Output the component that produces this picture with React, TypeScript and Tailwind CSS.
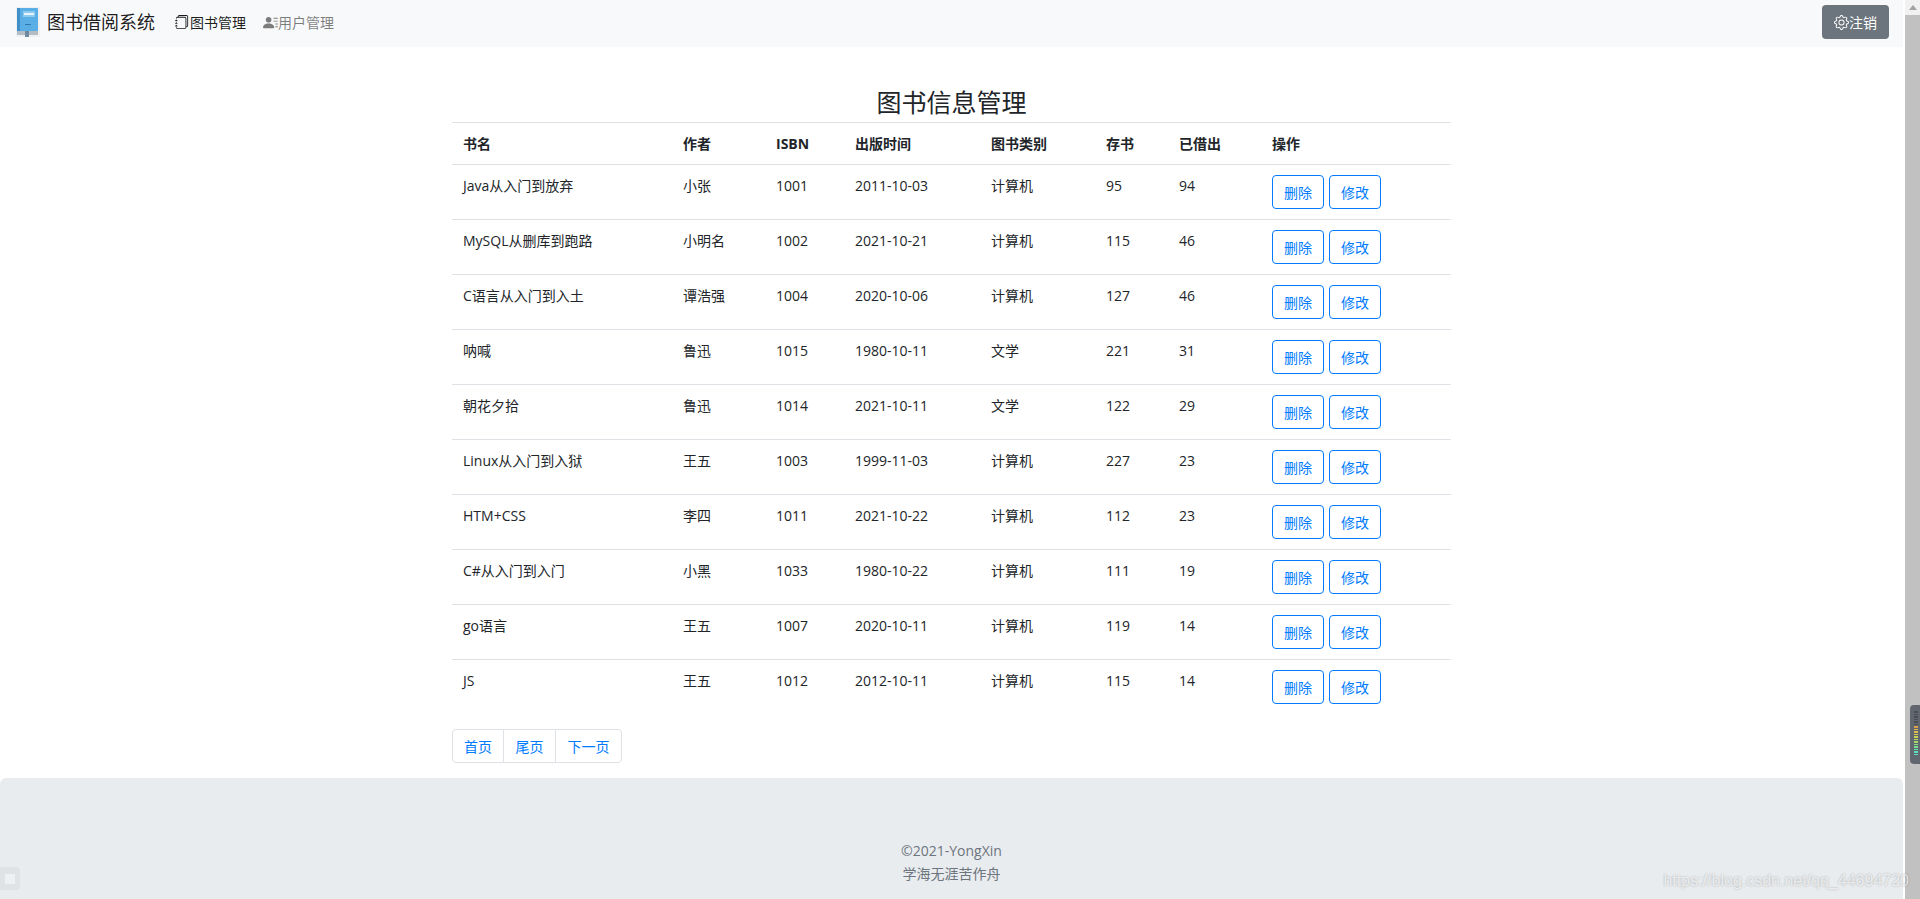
import { BsGear, BsJournals, BsPersonLinesFill } from 'react-icons/bs';

const books = [
  { name: 'Java从入门到放弃', author: '小张', isbn: '1001', date: '2011-10-03', type: '计算机', stock: 95, lent: 94 },
  { name: 'MySQL从删库到跑路', author: '小明名', isbn: '1002', date: '2021-10-21', type: '计算机', stock: 115, lent: 46 },
  { name: 'C语言从入门到入土', author: '谭浩强', isbn: '1004', date: '2020-10-06', type: '计算机', stock: 127, lent: 46 },
  { name: '呐喊', author: '鲁迅', isbn: '1015', date: '1980-10-11', type: '文学', stock: 221, lent: 31 },
  { name: '朝花夕拾', author: '鲁迅', isbn: '1014', date: '2021-10-11', type: '文学', stock: 122, lent: 29 },
  { name: 'Linux从入门到入狱', author: '王五', isbn: '1003', date: '1999-11-03', type: '计算机', stock: 227, lent: 23 },
  { name: 'HTM+CSS', author: '李四', isbn: '1011', date: '2021-10-22', type: '计算机', stock: 112, lent: 23 },
  { name: 'C#从入门到入门', author: '小黑', isbn: '1033', date: '1980-10-22', type: '计算机', stock: 111, lent: 19 },
  { name: 'go语言', author: '王五', isbn: '1007', date: '2020-10-11', type: '计算机', stock: 119, lent: 14 },
  { name: 'JS', author: '王五', isbn: '1012', date: '2012-10-11', type: '计算机', stock: 115, lent: 14 },
];

const headers = ['书名', '作者', 'ISBN', '出版时间', '图书类别', '存书', '已借出', '操作'];

function Logo() {
  return (
    <svg width="24" height="30" viewBox="0 0 24 30" className="shrink-0">
      <rect x="0" y="0" width="24" height="30" fill="#eef0f2" />
      <rect x="1" y="1" width="21" height="23" rx="1" fill="#5aaee6" />
      <rect x="1" y="1" width="3" height="23" fill="#3f8fcb" />
      <rect x="7" y="4" width="12" height="6" fill="#8ccbf0" />
      <rect x="8" y="6" width="10" height="2" fill="#e8f4fb" />
      <rect x="9" y="17" width="6" height="1" fill="#2f78ad" />
      <rect x="1" y="24" width="21" height="4" fill="#b4bcc4" />
      <rect x="9" y="24" width="4" height="6" fill="#6f8aa0" />
    </svg>
  );
}

function OutlineButton({ label }: { label: string }) {
  return (
    <button className="w-[52px] h-[34px] pt-px border border-[#007bff] rounded text-[#007bff] text-[14px] leading-none bg-white">
      {label}
    </button>
  );
}

export default function App() {
  return (
    <div
      className="relative flex h-[899px] overflow-hidden bg-white text-[#212529] text-[14px]"
      style={{ fontFamily: '"Open Sans", "Noto Sans CJK SC", sans-serif' }}
    >
      <div className="flex flex-col flex-1 min-w-0">
        <nav className="flex items-center h-[47px] shrink-0 bg-[#f8f9fa] pl-4 pr-[14px] pb-[3px]">
          <Logo />
          <span className="ml-[7px] text-[18px] text-black/90">图书借阅系统</span>
          <a className="flex items-center ml-5 text-black/90">
            <BsJournals className="w-[14px] h-[14px] mr-px" />
            <span>图书管理</span>
          </a>
          <a className="flex items-center ml-[17px] text-black/50">
            <BsPersonLinesFill className="w-[15px] h-[15px]" />
            <span>用户管理</span>
          </a>
          <button className="flex items-center justify-center ml-auto w-[67px] h-[34px] rounded bg-[#6c757d] text-white text-[14px]">
            <BsGear className="w-[15px] h-[15px]" />
            <span>注销</span>
          </button>
        </nav>

        <main className="w-[999px] ml-[452px] flex-1">
          <h1 className="pt-[38px] h-[75px] text-center text-[25px] leading-[34px] font-normal">图书信息管理</h1>
          <table className="w-full table-fixed border-collapse">
            <colgroup>
              <col className="w-[219px]" />
              <col className="w-[93px]" />
              <col className="w-[79px]" />
              <col className="w-[136px]" />
              <col className="w-[115px]" />
              <col className="w-[73px]" />
              <col className="w-[93px]" />
              <col />
            </colgroup>
            <thead>
              <tr className="h-[42px] border-y border-[#dee2e6]">
                {headers.map((h) => (
                  <th key={h} className="px-3 first:pl-[11px] text-left font-bold">
                    {h}
                  </th>
                ))}
              </tr>
            </thead>
            <tbody>
              {books.map((b) => (
                <tr key={b.isbn} className="h-[55px] border-b border-[#dee2e6] last:border-b-0 align-top">
                  <td className="pl-[11px] pr-3 pt-[10px]">{b.name}</td>
                  <td className="px-3 pt-[10px]">{b.author}</td>
                  <td className="px-3 pt-[10px]">{b.isbn}</td>
                  <td className="px-3 pt-[10px]">{b.date}</td>
                  <td className="px-3 pt-[10px]">{b.type}</td>
                  <td className="px-3 pt-[10px]">{b.stock}</td>
                  <td className="px-3 pt-[10px]">{b.lent}</td>
                  <td className="px-3 pt-[10px]">
                    <div className="flex gap-[5px]">
                      <OutlineButton label="删除" />
                      <OutlineButton label="修改" />
                    </div>
                  </td>
                </tr>
              ))}
            </tbody>
          </table>
          <div className="flex mt-[14px] w-fit h-[34px] border border-[#dee2e6] rounded text-[#007bff]">
            <a className="w-[51px] pt-[2px] flex items-center justify-center border-r border-[#dee2e6]">首页</a>
            <a className="w-[52px] pt-[2px] flex items-center justify-center border-r border-[#dee2e6]">尾页</a>
            <a className="w-[65px] pt-[2px] flex items-center justify-center">下一页</a>
          </div>
        </main>

        <footer className="h-[121px] shrink-0 bg-[#e9ecef] rounded-t-md flex flex-col items-center pt-[61px] text-[#6c757d] leading-[23px]">
          <p>©2021-YongXin</p>
          <p>学海无涯苦作舟</p>
        </footer>
      </div>

      {/* scrollbar */}
      <div className="w-[17px] shrink-0 flex flex-col bg-white pl-[2px]">
        <div className="h-[15px] bg-[#f1f1f1] flex items-center justify-center">
          <div className="w-0 h-0 border-x-[4px] border-x-transparent border-b-[5px] border-b-[#a3a3a3]" />
        </div>
        <div className="flex-1 bg-[#c1c1c1]" />
      </div>

      {/* overlays from browser extensions and the image host */}
      <div className="absolute left-0 bottom-[9px] w-[20px] h-[23px] bg-[#dfe3e6] flex items-center justify-center rounded-r-sm">
        <div className="w-[10px] h-[10px] bg-[#eef0f2]" />
      </div>
      <div className="absolute right-0 top-[705px] w-[10px] h-[59px] bg-[#62666f] rounded-l flex flex-col items-center gap-px pt-[6px] pl-[2px]">
        {['#4a4e56','#4a4e56','#4a4e56','#4a4e56','#4a4e56','#4a4e56','#d9a24a','#d9b04a','#d9c04a','#d4cc4f','#c9d257','#b8d65e','#a3da6c','#8cdc80','#78de94','#68dea8','#5cdeb8','#56debf'].map((c, i) => (
          <div key={i} className="w-[4px] h-[1.5px]" style={{ backgroundColor: c }} />
        ))}
      </div>
      <span className="absolute right-[11px] bottom-[8px] text-[16px] leading-5 text-white/70" style={{ fontFamily: '"Liberation Sans", sans-serif', textShadow: '0 0 2px rgba(0,0,0,.3)' }}>
        https://blog.csdn.net/qq_44694720
      </span>
    </div>
  );
}
